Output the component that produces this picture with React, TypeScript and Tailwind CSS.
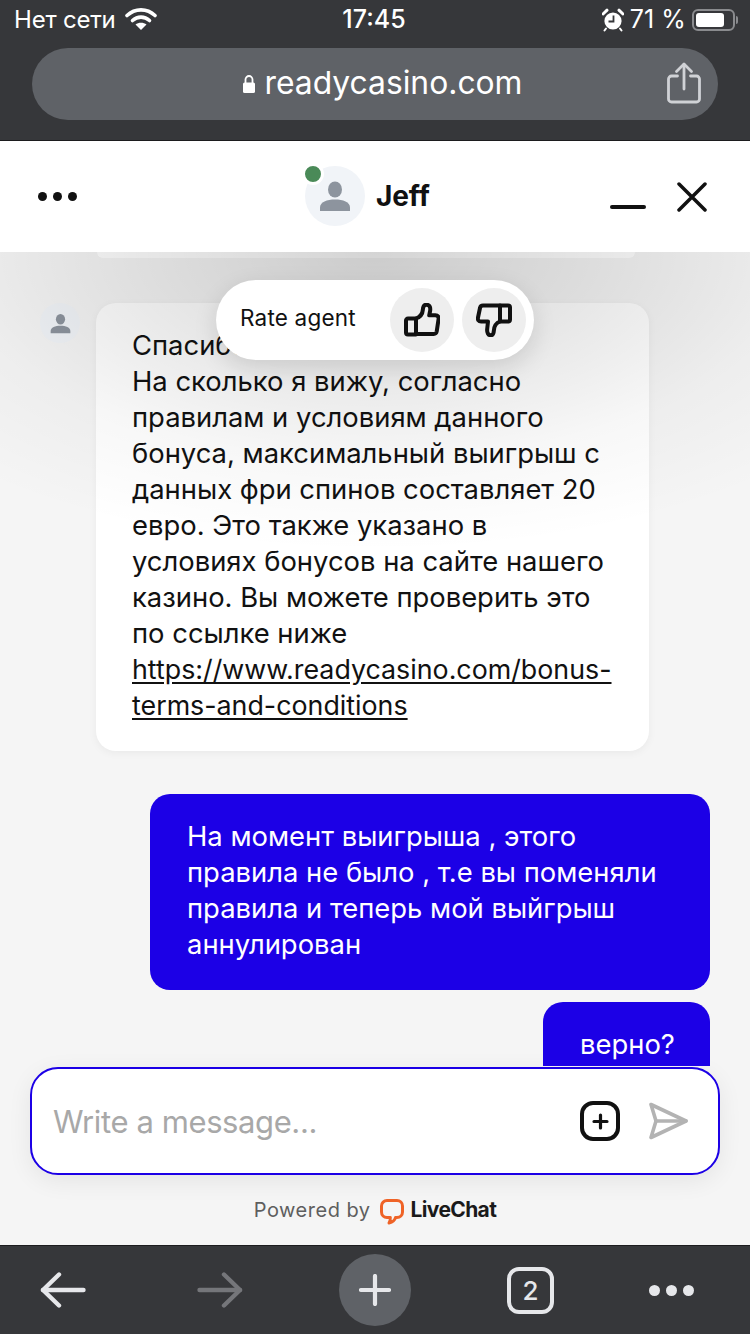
import React from "react";

const Wifi = () => (
  <svg width="32" height="24" viewBox="0 0 32 24" fill="none" className="ml-[9px] mt-[-2px]">
    <path d="M2 8.500C10 1 22 1 30 8.500" stroke="#fff" strokeWidth="3.600" strokeLinecap="round" />
    <path d="M7.500 13.500C12.500 9 19.500 9 24.500 13.500" stroke="#fff" strokeWidth="3.600" strokeLinecap="round" />
    <path d="M16 23L10.500 17.500C13.500 15 18.500 15 21.500 17.500Z" fill="#fff" />
  </svg>
);

const Alarm = () => (
  <svg width="22" height="24" viewBox="0 0 22 24" fill="none">
    <path d="M1 6L5 2.200" stroke="#fff" strokeWidth="3" strokeLinecap="round" />
    <path d="M21 6L17 2.200" stroke="#fff" strokeWidth="3" strokeLinecap="round" />
    <circle cx="11" cy="13" r="8.600" fill="#fff" />
    <path d="M11.500 7.500V13.500H6.500" stroke="#36373a" strokeWidth="1.800" />
    <path d="M4 20.500L2.500 22.500M18 20.500L19.500 22.500" stroke="#fff" strokeWidth="2" strokeLinecap="round" />
  </svg>
);

const Lock = () => (
  <svg width="14" height="20" viewBox="0 0 14 20" fill="none">
    <path d="M3.500 9V5.500a3.500 3.500 0 0 1 7 0V9" stroke="#fff" strokeWidth="1.800" />
    <rect x="1" y="8.500" width="12" height="10.500" rx="1.600" fill="#fff" />
  </svg>
);

const Share = () => (
  <svg width="34" height="42" viewBox="0 0 34 42" fill="none" stroke="#d0d2d6" strokeWidth="2.800" strokeLinecap="round" strokeLinejoin="round">
    <path d="M10.500 14H4.500a3 3 0 0 0-3 3v20a3 3 0 0 0 3 3h25a3 3 0 0 0 3-3V17a3 3 0 0 0-3-3h-6" />
    <path d="M17 27V2.500" />
    <path d="M9.500 9.500L17 2l7.500 7.500" />
  </svg>
);

const Person = ({ size, color }: { size: number; color: string }) => (
  <svg width={size} height={size} viewBox="0 0 32 32" fill={color}>
    <ellipse cx="16" cy="9.500" rx="7" ry="8" />
    <path d="M1 31v-3.500C1 22 8 19.500 16 19.500S31 22 31 27.500V31Z" />
  </svg>
);

const ThumbUp = () => (
  <svg width="36" height="34" viewBox="0 0 36 34" fill="none" stroke="#111" strokeWidth="4" strokeLinejoin="round" strokeLinecap="round">
    <path d="M12 15.500v16H4a2 2 0 0 1-2-2v-12a2 2 0 0 1 2-2Z" />
    <path d="M12 15.500c4-1.500 6.500-4.500 6.800-8.500.2-3 1-5.300 3.600-5.300 3.400 0 4.400 3 3.600 6.800l-.8 3.800h6.200c2.600 0 3.600 1.800 3.100 4.200l-1.800 12c-.3 1.600-1.400 2.500-3 2.500H12" />
  </svg>
);

const ThumbDown = () => (
  <svg width="36" height="34" viewBox="0 0 36 34" fill="none" stroke="#111" strokeWidth="4" strokeLinejoin="round" strokeLinecap="round">
    <path d="M24 18.500v-16h8a2 2 0 0 1 2 2v12a2 2 0 0 1-2 2Z" />
    <path d="M24 2.500H7c-1.600 0-2.700.9-3 2.500L2 14.500c-.5 2.400.5 4 3.100 4H12l-.8 7.500c-.4 3.500 1 6.300 3.500 6.300 2.300 0 3-2 3.200-5 .3-4 2.100-7.300 6.100-8.800" />
  </svg>
);

const Send = () => (
  <svg width="40" height="38" viewBox="0 0 40 38" fill="none" stroke="#b3b3b3" strokeWidth="3.600" strokeLinejoin="round" strokeLinecap="round">
    <path d="M3 2.500L38 19 3 35.500 8 19Z" />
    <path d="M8 19H38" />
  </svg>
);

const LiveChatLogo = () => (
  <svg width="24" height="26" viewBox="0 0 24 26" fill="none">
    <path d="M7 1.500h10a5.500 5.500 0 0 1 5.500 5.500v6a5.500 5.500 0 0 1-5.500 5.500h-1.500c-.6 2.600-3 4.800-6.500 5.500 1-1.600 1.500-3.400 1.300-5.500H7A5.500 5.500 0 0 1 1.500 13V7A5.500 5.500 0 0 1 7 1.500Z" stroke="#ef6327" strokeWidth="3" strokeLinejoin="round" />
  </svg>
);

const ArrowLeft = ({ color }: { color: string }) => (
  <svg width="46" height="36" viewBox="0 0 46 36" fill="none" stroke={color} strokeWidth="4.400" strokeLinecap="round" strokeLinejoin="round">
    <path d="M43.500 18H3" />
    <path d="M19 2.500L3 18l16 15.500" />
  </svg>
);

const ArrowRight = ({ color }: { color: string }) => (
  <svg width="46" height="36" viewBox="0 0 46 36" fill="none" stroke={color} strokeWidth="4.400" strokeLinecap="round" strokeLinejoin="round">
    <path d="M2.500 18H43" />
    <path d="M27 2.500L43 18 27 33.500" />
  </svg>
);

export default function App() {
  return (
    <div
      className="w-[750px] h-[1334px] flex flex-col overflow-hidden bg-[#f5f5f5] text-[#111]"
      style={{ fontFamily: "Inter, 'Noto Sans', sans-serif" }}
    >
      {/* browser top */}
      <div className="h-[141px] shrink-0 bg-[#36373a] border-b border-[#1c1c1e] flex flex-col text-white">
        <div className="h-[48px] grid grid-cols-3 items-center pl-[14px] pr-[12px] pb-[8px]">
          <div className="flex items-center text-[24px] font-normal tracking-[-0.2px]">Нет сети<Wifi /></div>
          <div className="text-center text-[25px] font-medium pr-[4px]">17:45</div>
          <div className="flex items-center justify-end gap-[6px]">
            <Alarm />
            <span className="text-[25px] tracking-[0.1px]">71 %</span>
            <div className="flex items-center">
              <div className="w-[43px] h-[22px] rounded-[6px] border-2 border-[#8a8b8e] p-[2px]">
                <div className="w-[28px] h-full rounded-[3px] bg-white" />
              </div>
              <div className="w-[2px] h-[8px] ml-[1px] rounded-r bg-[#8a8b8e]" />
            </div>
          </div>
        </div>
        <div className="mx-[32px] h-[72px] rounded-[36px] bg-[#5f6267] relative flex items-center justify-center gap-[9px] pl-[14px]">
          <Lock />
          <span className="text-[31.800px] leading-none pb-[2px]">readycasino.com</span>
          <div className="absolute right-[17px] top-[14px]"><Share /></div>
        </div>
      </div>

      {/* chat header */}
      <div className="h-[111px] shrink-0 bg-white relative z-10 flex items-center justify-between pl-[38px] pr-[43px]">
        <div className="flex gap-[6px]">
          <span className="w-[9px] h-[9px] rounded-full bg-[#111]" />
          <span className="w-[9px] h-[9px] rounded-full bg-[#111]" />
          <span className="w-[9px] h-[9px] rounded-full bg-[#111]" />
        </div>
        <div className="absolute left-[305px] top-[25px] flex items-center gap-[11px]">
          <div className="relative w-[60px] h-[60px] rounded-full bg-[#f1f4f8] flex items-center justify-center">
            <Person size={32} color="#8d949e" />
            <span className="absolute left-[-3px] top-[-3px] w-[22px] h-[22px] rounded-full bg-[#4a8a58] border-[3px] border-white" />
          </div>
          <span className="text-[28px] font-bold leading-none tracking-[-0.1px]">Jeff</span>
        </div>
        <div className="flex items-center gap-[31px]">
          <div className="w-[36px] h-[4px] rounded-[2px] bg-[#111] mt-[20px]" />
          <svg width="30" height="30" viewBox="0 0 30 30" fill="none" stroke="#111" strokeWidth="3.500" strokeLinecap="round">
            <path d="M2 2L28 28M28 2L2 28" />
          </svg>
        </div>
      </div>

      {/* messages */}
      <div className="relative h-[814px] shrink-0 overflow-hidden text-[27.400px] leading-[36px]">
        <div className="ml-[97px] w-[538px] h-[6px] rounded-b-[20px] bg-white" />
        <div className="mt-[45px] ml-[40px] flex items-start">
          <div className="w-[40px] h-[40px] rounded-full bg-[#f1f4f8] flex items-center justify-center">
            <Person size={21} color="#8d949e" />
          </div>
          <div className="ml-[16px] w-[553px] h-[448px] rounded-[20px] bg-white pl-[36px] pt-[24px] whitespace-nowrap shadow-[0_2px_8px_rgba(0,0,0,0.05)]">
            <div>Спасибо.</div>
            <div>На сколько я вижу, согласно</div>
            <div>правилам и условиям данного</div>
            <div>бонуса, максимальный выигрыш с</div>
            <div>данных фри спинов составляет 20</div>
            <div>евро. Это также указано в</div>
            <div>условиях бонусов на сайте нашего</div>
            <div>казино. Вы можете проверить это</div>
            <div>по ссылке ниже</div>
            <div className="text-[26.800px] underline underline-offset-[3px]">https://www.readycasino.com/bonus-</div>
            <div className="text-[26.800px] underline underline-offset-[3px]">terms-and-conditions</div>
          </div>
        </div>
        <div className="mt-[43px] ml-[150px] w-[560px] h-[196px] rounded-[20px] bg-[#1c00e6] text-white px-[37px] pt-[24px]">
          На момент выигрыша , этого правила не было , т.е вы поменяли правила и теперь мой выйгрыш аннулирован
        </div>
        <div className="mt-[12px] ml-[543px] w-[167px] h-[80px] rounded-t-[20px] bg-[#1c00e6] text-white pl-[37px] pt-[24px]">
          верно?
        </div>

        {/* fade under the header */}
        <div className="absolute inset-x-0 top-0 h-[320px] pointer-events-none bg-[radial-gradient(ellipse_600px_300px_at_50%_0%,rgba(0,0,0,0.17)_0%,rgba(0,0,0,0.1)_35%,rgba(0,0,0,0.03)_70%,rgba(0,0,0,0)_100%)]" />

        {/* rate agent */}
        <div className="absolute left-[216px] top-[28px] w-[318px] h-[80px] rounded-[40px] bg-white flex items-center pl-[24px] pr-[8px] justify-between shadow-[0_8px_24px_rgba(0,0,0,0.12)]">
          <span className="text-[22.500px] leading-none tracking-[0.2px] pb-[4px]">Rate agent</span>
          <div className="flex gap-[8px]">
            <div className="w-[64px] h-[64px] rounded-full bg-[#eeeeee] flex items-center justify-center"><ThumbUp /></div>
            <div className="w-[64px] h-[64px] rounded-full bg-[#eeeeee] flex items-center justify-center"><ThumbDown /></div>
          </div>
        </div>
      </div>

      {/* input + footer */}
      <div className="h-[179px] shrink-0 flex flex-col items-center pt-[1px] bg-[#f5f5f5]">
        <div className="w-[690px] h-[108px] shrink-0 rounded-[28px] border-2 border-[#1c00e6] bg-white flex items-center pl-[21px] pr-[30px] shadow-[0_6px_24px_rgba(0,0,0,0.07)]">
          <span className="flex-1 text-[31px] text-[#a8a8a8] tracking-[-0.4px] pt-[2px]">Write a message...</span>
          <div className="w-[40px] h-[40px] rounded-[13px] border-[4px] border-[#111] flex items-center justify-center mr-[28px]">
            <svg width="17" height="17" viewBox="0 0 17 17" stroke="#111" strokeWidth="3.200" strokeLinecap="round">
              <path d="M8.500 2V15M2 8.500H15" />
            </svg>
          </div>
          <Send />
        </div>
        <div className="mt-[20px] flex items-center h-[30px]">
          <span className="text-[20px] text-[#5e5e5e] tracking-[0.5px]">Powered by</span>
          <span className="ml-[9px] mt-[4px]"><LiveChatLogo /></span>
          <span className="ml-[7px] text-[21px] font-bold tracking-[-0.65px] text-[#1a1a1a]">LiveChat</span>
        </div>
      </div>

      {/* browser bottom */}
      <div className="h-[89px] shrink-0 bg-[#36373a] border-t border-[#1c1c1e] flex items-center pl-[40px]">
        <ArrowLeft color="#e6e7ea" />
        <div className="ml-[111px]"><ArrowRight color="#75767a" /></div>
        <div className="ml-[96px] w-[72px] h-[72px] rounded-full bg-[#5f6267] flex items-center justify-center">
          <svg width="32" height="32" viewBox="0 0 32 32" stroke="#e6e7ea" strokeWidth="4.200" strokeLinecap="round">
            <path d="M16 2V30M2 16H30" />
          </svg>
        </div>
        <div className="ml-[96px] w-[47px] h-[47px] rounded-[12px] border-[4px] border-[#e6e7ea] flex items-center justify-center text-[26px] font-medium text-[#e6e7ea]">2</div>
        <div className="ml-[95px] flex gap-[6px]">
          <span className="w-[11px] h-[11px] rounded-full bg-[#e6e7ea]" />
          <span className="w-[11px] h-[11px] rounded-full bg-[#e6e7ea]" />
          <span className="w-[11px] h-[11px] rounded-full bg-[#e6e7ea]" />
        </div>
      </div>
    </div>
  );
}
